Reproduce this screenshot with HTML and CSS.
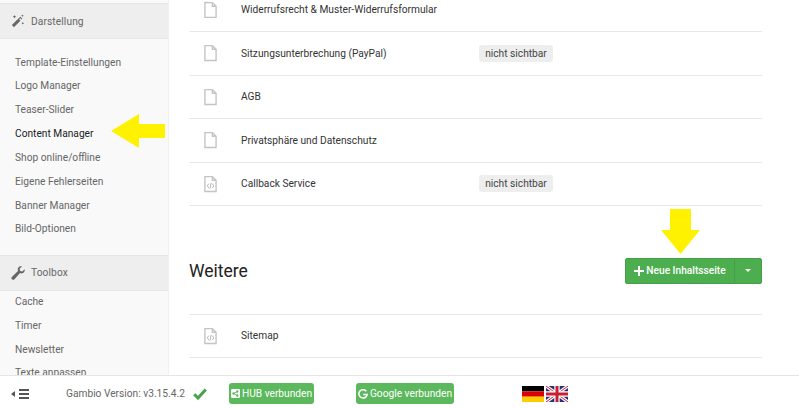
FILE: index.html
```html
<!DOCTYPE html>
<html lang="de">
<head>
<meta charset="utf-8">
<title>Content Manager</title>
<link rel="stylesheet" href="styles.css">
</head>
<body>
<div class="app">
  <div class="top">
    <aside class="sidebar">
      <div class="head head-first">
        <svg class="head-icon" viewBox="0 0 16 16"><path d="M1 12.600 10.600 3l2.400 2.400L3.400 15z" fill="#666"/><path d="M9.300 6.100l1.300-1.300 1.900 1.900-1.300 1.300z" fill="#eee"/><path d="M4 1l.6 1.400L6 3l-1.400.6L4 5l-.6-1.400L2 3l1.400-.6zM13 .5l.5 1 1 .5-1 .5-.5 1-.5-1-1-.5 1-.5zM13.500 9l.5 1 1 .5-1 .5-.5 1-.5-1-1-.5 1-.5z" fill="#666"/></svg>
        <span>Darstellung</span>
      </div>
      <nav class="menu menu-first">
        <a>Template-Einstellungen</a>
        <a>Logo Manager</a>
        <a>Teaser-Slider</a>
        <a class="active">Content Manager</a>
        <a>Shop online/offline</a>
        <a>Eigene Fehlerseiten</a>
        <a>Banner Manager</a>
        <a>Bild-Optionen</a>
      </nav>
      <div class="head">
        <svg class="head-icon" viewBox="0 0 16 16"><path d="M15.600 3.600c.4 2-.4 3.700-2 4.500-1.100.5-2.300.5-3.300 0L4 15c-.9.9-2.200 1-3 .2s-.7-2.100.2-3L8 5.800c-.5-1-.5-2.200 0-3.300C8.800.9 10.500.1 12.500.5L9.800 3.200l.6 2.500 2.500.6z" fill="#666"/></svg>
        <span>Toolbox</span>
      </div>
      <nav class="menu menu-second">
        <a>Cache</a>
        <a>Timer</a>
        <a>Newsletter</a>
        <a>Texte anpassen</a>
      </nav>
    </aside>
    <main class="content">
      <div class="row row-clipped">
        <svg class="doc" viewBox="0 0 14 18"><path d="M1 1h8l4 4v12H1z M9 1v4h4" fill="none" stroke="#c4c4c4" stroke-width="1.500"/></svg>
        <span class="name">Widerrufsrecht &amp; Muster-Widerrufsformular</span>
      </div>
      <div class="row">
        <svg class="doc" viewBox="0 0 14 18"><path d="M1 1h8l4 4v12H1z M9 1v4h4" fill="none" stroke="#c4c4c4" stroke-width="1.500"/></svg>
        <span class="name">Sitzungsunterbrechung (PayPal)</span>
        <span class="tag">nicht sichtbar</span>
      </div>
      <div class="row">
        <svg class="doc" viewBox="0 0 14 18"><path d="M1 1h8l4 4v12H1z M9 1v4h4" fill="none" stroke="#c4c4c4" stroke-width="1.500"/></svg>
        <span class="name">AGB</span>
      </div>
      <div class="row">
        <svg class="doc" viewBox="0 0 14 18"><path d="M1 1h8l4 4v12H1z M9 1v4h4" fill="none" stroke="#c4c4c4" stroke-width="1.500"/></svg>
        <span class="name">Privatsphäre und Datenschutz</span>
      </div>
      <div class="row">
        <svg class="doc" viewBox="0 0 14 18"><path d="M1 1h8l4 4v12H1z M9 1v4h4" fill="none" stroke="#c4c4c4" stroke-width="1.500"/><path d="M5.300 8.500 3.500 11l1.800 2.500M8.700 8.500l1.800 2.500-1.800 2.500M7.700 8 6.300 14" fill="none" stroke="#aaa" stroke-width=".9"/></svg>
        <span class="name">Callback Service</span>
        <span class="tag">nicht sichtbar</span>
      </div>
      <div class="section">
        <h2>Weitere</h2>
        <div class="btn-group">
          <button class="btn-main"><svg class="plus" viewBox="0 0 10 10"><path d="M5 0v10M0 5h10" stroke="#fff" stroke-width="2"/></svg>Neue Inhaltsseite</button>
          <button class="btn-caret"><span class="caret"></span></button>
        </div>
      </div>
      <div class="row row-first">
        <svg class="doc" viewBox="0 0 14 18"><path d="M1 1h8l4 4v12H1z M9 1v4h4" fill="none" stroke="#c4c4c4" stroke-width="1.500"/><path d="M5.300 8.500 3.500 11l1.800 2.500M8.700 8.500l1.800 2.500-1.800 2.500M7.700 8 6.300 14" fill="none" stroke="#aaa" stroke-width=".9"/></svg>
        <span class="name">Sitemap</span>
      </div>
    </main>
  </div>
  <footer class="footer">
    <div class="toggle">
      <span class="tri"></span>
      <span class="bars"><i></i><i></i><i></i></span>
    </div>
    <span class="version">Gambio Version: v3.15.4.2</span>
    <svg class="check" viewBox="0 0 14 12"><path d="M1.200 6.200 5 10l7.800-8.500" fill="none" stroke="#45a349" stroke-width="3"/></svg>
    <span class="pill pill-hub"><svg class="pill-icon" viewBox="0 0 10 10"><rect width="10" height="10" rx="1.500" fill="#fff"/><circle cx="2.800" cy="5" r="1.300" fill="#5cb85c"/><circle cx="7" cy="2.800" r="1.300" fill="#5cb85c"/><circle cx="7" cy="7.200" r="1.300" fill="#5cb85c"/><path d="M2.800 5 7 2.800M2.800 5 7 7.200" stroke="#5cb85c"/></svg>HUB verbunden</span>
    <span class="pill pill-google"><svg class="pill-icon-g" viewBox="0 0 12 12"><path d="M10 2.700A5 5 0 1 0 11 6.500H6.300" fill="none" stroke="#fff" stroke-width="1.900"/></svg>Google verbunden</span>
    <div class="flags">
      <svg class="flag" viewBox="0 0 22 16"><rect width="22" height="5.400" fill="#000"/><rect y="5.400" width="22" height="5.300" fill="#d00"/><rect y="10.700" width="22" height="5.300" fill="#fc0"/></svg>
      <svg class="flag" viewBox="0 0 22 16"><rect width="22" height="16" fill="#26307a"/><path d="M0 0 22 16M22 0 0 16" stroke="#fff" stroke-width="3.200"/><path d="M0 0 22 16M22 0 0 16" stroke="#c8202f" stroke-width="1"/><path d="M11 0v16M0 8h22" stroke="#fff" stroke-width="5.400"/><path d="M11 0v16M0 8h22" stroke="#c8202f" stroke-width="3"/></svg>
    </div>
  </footer>
</div>
<svg class="arrow arrow-left" viewBox="0 0 54 34"><path d="M0 17 28 0v10h26v14H28v10z" fill="#fff200"/></svg>
<svg class="arrow arrow-down" viewBox="0 0 39 45"><path d="M9 0h21v21h9L19.500 45 0 21h9z" fill="#fff200"/></svg>
</body>
</html>
```
FILE: styles.css
```css
* { box-sizing: border-box; }
html, body { margin: 0; padding: 0; }
body {
  width: 799px;
  height: 408px;
  overflow: hidden;
  position: relative;
  font-family: Roboto, "Liberation Sans", sans-serif;
  font-size: 10.200px;
  color: #333;
  background: #fff;
}
.app { display: flex; flex-direction: column; height: 408px; }
.top { display: flex; height: 375px; overflow: hidden; }
.sidebar {
  width: 169px;
  flex: none;
  background: #f9f9f9;
  border-right: 1px solid #f1f1f1;
  padding-top: 3px;
  overflow: hidden;
}
.head {
  height: 36px;
  background: #eee;
  border-top: 1px solid #e6e6e6;
  border-bottom: 1px solid #e6e6e6;
  display: flex;
  align-items: center;
  padding-left: 11px;
  gap: 6px;
  color: #666;
  letter-spacing: .1px;
}
.head-icon { width: 14px; height: 14px; flex: none; }
.menu { display: flex; flex-direction: column; }
.menu a {
  height: 23.850px;
  line-height: 23.850px;
  flex: none;
  padding-left: 15px;
  color: #666;
  white-space: nowrap;
}
.menu a.active { color: #222; }
.menu-first { padding: 11.500px 0 13.700px; }
.menu-second { margin-top: -1px; }
.content {
  flex: none;
  width: 573px;
  margin-left: 20px;
}
.row {
  height: 43.500px;
  border-bottom: 1px solid #e8e8e8;
  display: flex;
  align-items: center;
  position: relative;
}
.row-clipped { height: 32px; align-items: flex-start; }
.row-clipped .doc { margin-top: 1px; }
.row-clipped .name { margin-top: 4px; }
.row-first { border-top: 1px solid #e8e8e8; height: 43.500px; }
.doc { width: 13px; height: 18px; margin-left: 15px; flex: none; }
.name { margin-left: 24px; width: 238px; flex: none; white-space: nowrap; color: #333; }
.tag {
  background: #eee;
  border-radius: 3px;
  color: #444;
  height: 17px;
  line-height: 17px;
  width: 74px;
  text-align: center;
}
.section {
  height: 108px;
  display: flex;
  align-items: center;
  justify-content: space-between;
  padding-top: 21px;
}
h2 { margin: 0; font-size: 17.500px; font-weight: 400; color: #222; }
.btn-group { display: flex; height: 26px; }
button {
  background: #4cae4f;
  border: 1px solid #43a047;
  color: #fff;
  font: 500 10.200px Roboto, "Liberation Sans", sans-serif;
  padding: 0;
  display: flex;
  align-items: center;
  justify-content: center;
}
.btn-main { width: 110px; border-radius: 2px 0 0 2px; }
.btn-caret { width: 28px; margin-left: -1px; border-radius: 0 2px 2px 0; }
.plus { width: 10px; height: 10px; margin-right: 2px; }
.caret {
  width: 0; height: 0;
  border-left: 3.500px solid transparent;
  border-right: 3.500px solid transparent;
  border-top: 3.500px solid #fff;
}
.footer {
  height: 33px;
  flex: none;
  border-top: 1px solid #e6e6e6;
  padding-top: 3px;
  display: flex;
  align-items: center;
  background: #fff;
}
.toggle { display: flex; align-items: center; margin-left: 11px; width: 55px; gap: 4px; }
.tri {
  width: 0; height: 0;
  border-top: 3px solid transparent;
  border-bottom: 3px solid transparent;
  border-right: 4px solid #555;
}
.bars { display: flex; flex-direction: column; gap: 2px; width: 10px; }
.bars i { display: block; height: 2px; background: #555; }
.version { color: #666; white-space: nowrap; width: 127px; }
.check { width: 14px; height: 12px; }
.pill {
  background: #5cb85c;
  color: #fff;
  border-radius: 3px;
  height: 21px;
  display: flex;
  align-items: center;
  justify-content: center;
  white-space: nowrap;
}
.pill-hub { width: 85px; margin-left: 22px; }
.pill-google { width: 98px; margin-left: 42px; }
.pill-icon { width: 9px; height: 9px; margin-right: 2px; }
.pill-icon-g { width: 10px; height: 10px; margin-right: 2px; }
.flags { display: flex; margin-left: 68px; gap: 2px; }
.flag { width: 22px; height: 16px; display: block; }
.arrow { position: absolute; }
.arrow-left { left: 111px; top: 114px; width: 54px; height: 34px; }
.arrow-down { left: 661px; top: 209px; width: 39px; height: 45px; }
```
